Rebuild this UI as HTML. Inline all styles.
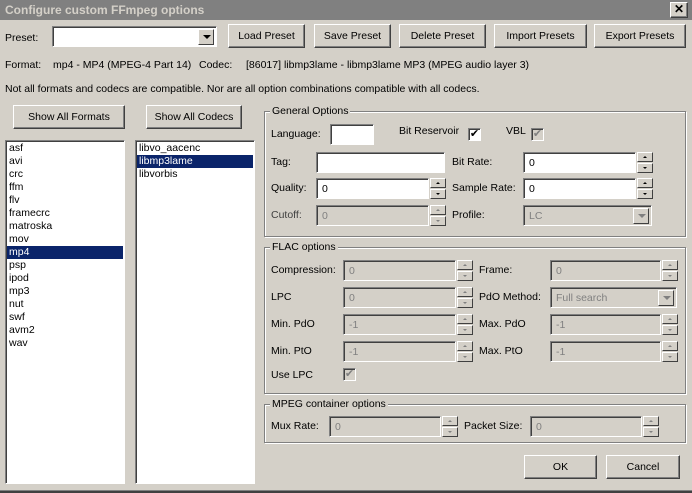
<!DOCTYPE html>
<html><head><meta charset="utf-8"><style>
*{box-sizing:border-box;margin:0;padding:0}
body{width:692px;height:493px;background:#d4d0c8;font-family:"Liberation Sans",sans-serif;font-size:10.5px;color:#000;position:relative;overflow:hidden}
.a{position:absolute}
.t{position:absolute;white-space:nowrap;line-height:13px;margin-top:2px}
.dis{color:#404040}
.btn{position:absolute;background:#d4d0c8;border:1px solid;border-color:#fff #404040 #404040 #fff;box-shadow:inset -1px -1px 0 #808080;text-align:center;white-space:nowrap}
.in{position:absolute;background:#fff;border:1px solid;border-color:#808080 #fff #fff #808080;box-shadow:inset 1px 1px 0 #404040;padding:4px 0 0 5px;line-height:13px}
.in.d{background:#d4d0c8;color:#808080}
.sp{position:absolute;width:16px;height:21px}
.sp div{position:absolute;left:0;width:16px;height:10px;background:#d4d0c8;border:1px solid;border-color:#fff #404040 #404040 #fff}
.sp div:after{content:"";position:absolute;left:5px;border-left:2px solid transparent;border-right:2px solid transparent}
.sp .u{top:0}.sp .u:after{top:3px;border-bottom:2px solid #000}
.sp .w{top:11px}.sp .w:after{top:3px;border-top:2px solid #000}
.sp.d .u:after{border-bottom-color:#808080}.sp.d .w:after{border-top-color:#808080}
.grp{position:absolute;border:1px solid #808080;box-shadow:1px 1px 0 #fff,inset 1px 1px 0 #fff}
.grp span{position:absolute;top:-8px;left:5px;background:#d4d0c8;padding:0 2px;line-height:14px}
.list{position:absolute;background:#fff;border:1px solid;border-color:#808080 #fff #fff #808080;box-shadow:inset 1px 1px 0 #404040}
.list div{height:13px;line-height:13px;padding-left:2px;margin-left:1px;margin-right:1px}
.sel{background:#0a246a;color:#fff}
.cb{position:absolute;width:13px;height:13px;background:#fff;border:1px solid;border-color:#808080 #fff #fff #808080;box-shadow:inset 1px 1px 0 #404040;font-size:11px;line-height:11px;text-align:center}
.dd{position:absolute;top:2px;right:2px;width:16px;height:16px;background:#d4d0c8;border:1px solid;border-color:#fff #404040 #404040 #fff}
.dd:after{content:"";position:absolute;left:4px;top:5px;border-left:4px solid transparent;border-right:4px solid transparent;border-top:4px solid #000}
.dd.d:after{border-top-color:#808080}
.btn.b{height:24px;line-height:23px}
</style></head><body>
<div class="a" style="left:0;top:0;width:692px;height:20px;background:#808080"></div>
<div class="t" style="left:5px;top:2px;color:#d4d0c8;font-weight:bold;font-size:12px">Configure custom FFmpeg options</div>
<div class="btn" style="left:670px;top:2px;width:18px;height:16px;font-weight:bold;font-size:12px;line-height:13px">✕</div>
<div class="a" style="left:0;top:490px;width:692px;height:3px;background:#404040;border-top:1px solid #808080"></div>

<div class="t" style="left:5px;top:30px">Preset:</div>
<div class="in" style="left:52px;top:26px;width:165px;height:21px"><div class="dd"></div></div>
<div class="btn b" style="left:228px;top:24px;width:77px">Load Preset</div>
<div class="btn b" style="left:314px;top:24px;width:77px">Save Preset</div>
<div class="btn b" style="left:399px;top:24px;width:87px">Delete Preset</div>
<div class="btn b" style="left:494px;top:24px;width:93px">Import Presets</div>
<div class="btn b" style="left:594px;top:24px;width:92px">Export Presets</div>

<div class="t" style="left:5px;top:57px">Format:</div>
<div class="t" style="left:53px;top:57px">mp4 - MP4 (MPEG-4 Part 14)</div>
<div class="t" style="left:199px;top:57px">Codec:</div>
<div class="t" style="left:246px;top:57px">[86017] libmp3lame - libmp3lame MP3 (MPEG audio layer 3)</div>
<div class="t" style="left:5px;top:81px">Not all formats and codecs are compatible. Nor are all option combinations compatible with all codecs.</div>

<div class="btn b" style="left:13px;top:105px;width:112px">Show All Formats</div>
<div class="btn b" style="left:146px;top:105px;width:96px">Show All Codecs</div>

<div class="list" style="left:5px;top:140px;width:120px;height:344px;padding-top:1px">
<div>asf</div><div>avi</div><div>crc</div><div>ffm</div><div>flv</div><div>framecrc</div><div>matroska</div><div>mov</div><div class="sel">mp4</div><div>psp</div><div>ipod</div><div>mp3</div><div>nut</div><div>swf</div><div>avm2</div><div>wav</div>
</div>
<div class="list" style="left:135px;top:140px;width:120px;height:344px;padding-top:1px">
<div>libvo_aacenc</div><div class="sel">libmp3lame</div><div>libvorbis</div>
</div>

<div class="grp" style="left:264px;top:111px;width:422px;height:126px"><span>General Options</span></div>
<div class="t" style="left:271px;top:126px">Language:</div>
<div class="in" style="left:330px;top:124px;width:44px;height:21px"></div>
<div class="t" style="left:399px;top:123px">Bit Reservoir</div>
<div class="cb" style="left:468px;top:128px">✔</div>
<div class="t" style="left:506px;top:123px">VBL</div>
<div class="cb" style="left:531px;top:128px;background:#d4d0c8;color:#808080">✔</div>
<div class="t" style="left:271px;top:154px">Tag:</div>
<div class="in" style="left:316px;top:152px;width:129px;height:21px"></div>
<div class="t" style="left:452px;top:154px">Bit Rate:</div>
<div class="in" style="left:523px;top:152px;width:113px;height:21px">0</div>
<div class="sp" style="left:637px;top:152px"><div class="u"></div><div class="w"></div></div>
<div class="t" style="left:271px;top:180px">Quality:</div>
<div class="in" style="left:316px;top:178px;width:113px;height:21px">0</div>
<div class="sp" style="left:430px;top:178px"><div class="u"></div><div class="w"></div></div>
<div class="t" style="left:452px;top:180px">Sample Rate:</div>
<div class="in" style="left:523px;top:178px;width:113px;height:21px">0</div>
<div class="sp" style="left:637px;top:178px"><div class="u"></div><div class="w"></div></div>
<div class="t dis" style="left:271px;top:207px">Cutoff:</div>
<div class="in d" style="left:316px;top:205px;width:113px;height:21px">0</div>
<div class="sp d" style="left:430px;top:205px"><div class="u"></div><div class="w"></div></div>
<div class="t" style="left:452px;top:207px">Profile:</div>
<div class="in d" style="left:523px;top:205px;width:129px;height:21px">LC<div class="dd d"></div></div>

<div class="grp" style="left:264px;top:247px;width:422px;height:147px"><span>FLAC options</span></div>
<div class="t" style="left:271px;top:262px">Compression:</div>
<div class="in d" style="left:343px;top:260px;width:113px;height:21px">0</div>
<div class="sp d" style="left:457px;top:260px"><div class="u"></div><div class="w"></div></div>
<div class="t" style="left:479px;top:262px">Frame:</div>
<div class="in d" style="left:550px;top:260px;width:111px;height:21px">0</div>
<div class="sp d" style="left:662px;top:260px"><div class="u"></div><div class="w"></div></div>
<div class="t" style="left:271px;top:289px">LPC</div>
<div class="in d" style="left:343px;top:287px;width:113px;height:21px">0</div>
<div class="sp d" style="left:457px;top:287px"><div class="u"></div><div class="w"></div></div>
<div class="t" style="left:479px;top:289px">PdO Method:</div>
<div class="in d" style="left:550px;top:287px;width:127px;height:21px">Full search<div class="dd d"></div></div>
<div class="t" style="left:271px;top:316px">Min. PdO</div>
<div class="in d" style="left:343px;top:314px;width:113px;height:21px">-1</div>
<div class="sp d" style="left:457px;top:314px"><div class="u"></div><div class="w"></div></div>
<div class="t" style="left:479px;top:316px">Max. PdO</div>
<div class="in d" style="left:550px;top:314px;width:111px;height:21px">-1</div>
<div class="sp d" style="left:662px;top:314px"><div class="u"></div><div class="w"></div></div>
<div class="t" style="left:271px;top:343px">Min. PtO</div>
<div class="in d" style="left:343px;top:341px;width:113px;height:21px">-1</div>
<div class="sp d" style="left:457px;top:341px"><div class="u"></div><div class="w"></div></div>
<div class="t" style="left:479px;top:343px">Max. PtO</div>
<div class="in d" style="left:550px;top:341px;width:111px;height:21px">-1</div>
<div class="sp d" style="left:662px;top:341px"><div class="u"></div><div class="w"></div></div>
<div class="t" style="left:271px;top:367px">Use LPC</div>
<div class="cb" style="left:343px;top:368px;background:#d4d0c8;color:#808080">✔</div>

<div class="grp" style="left:264px;top:404px;width:422px;height:39px"><span>MPEG container options</span></div>
<div class="t" style="left:271px;top:418px">Mux Rate:</div>
<div class="in d" style="left:329px;top:416px;width:112px;height:21px">0</div>
<div class="sp d" style="left:442px;top:416px"><div class="u"></div><div class="w"></div></div>
<div class="t" style="left:464px;top:418px">Packet Size:</div>
<div class="in d" style="left:530px;top:416px;width:112px;height:21px">0</div>
<div class="sp d" style="left:643px;top:416px"><div class="u"></div><div class="w"></div></div>

<div class="btn b" style="left:524px;top:455px;width:73px">OK</div>
<div class="btn b" style="left:606px;top:455px;width:74px">Cancel</div>
</body></html>
